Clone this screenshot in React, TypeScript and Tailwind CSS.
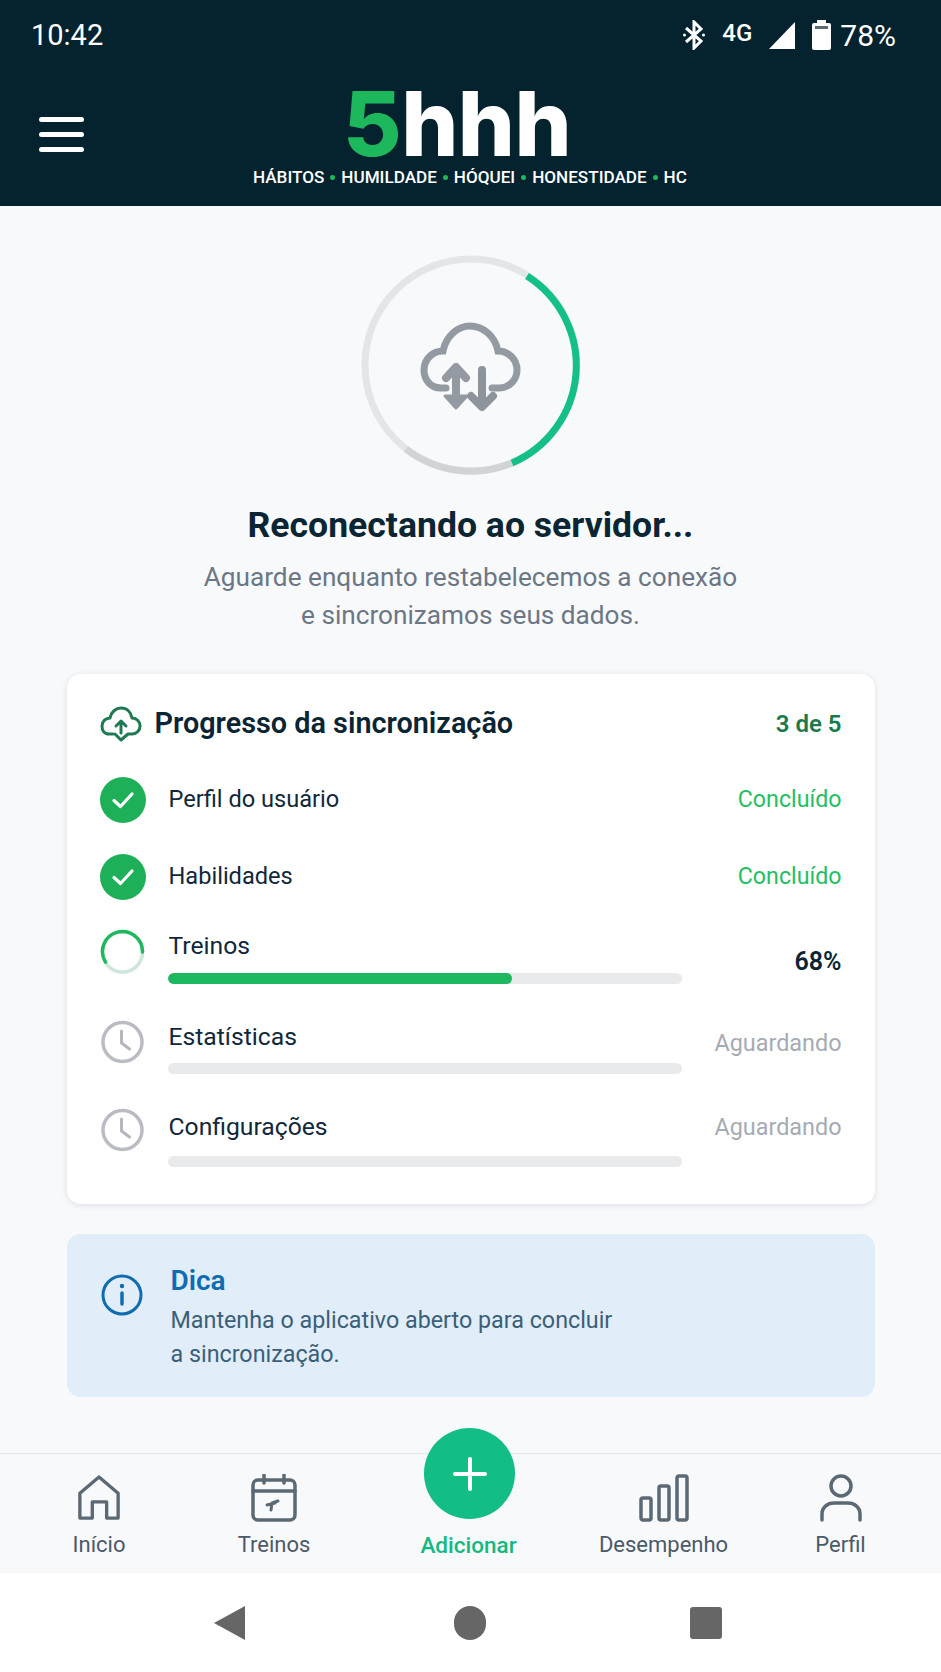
import React from "react";

const roboto = { fontFamily: 'Roboto, "Noto Sans", sans-serif' };

function Ring() {
  return (
    <svg width="230" height="230" viewBox="356 250 230 230" fill="none">
      <circle cx="471" cy="365" r="106" stroke="#e3e6e8" strokeWidth="7" />
      <path d="M512 463 A106 106 0 0 1 406 449" stroke="#d0d4d7" strokeWidth="7" />
      <path d="M527 276 A106 106 0 0 1 512 463" stroke="#14bf8a" strokeWidth="7" />
      <path d="M446 388 H441 C429 388 424 378 424 370 C424 359 433 351 443 351 C446 336 458 326 470 326 C483 326 495 336 498 351 C509 351 517 360 517 370 C517 380 509 388 499 388 H492" stroke="#949aa2" strokeWidth="7" strokeLinecap="round" />
      <path d="M456 368 V404 M446 378 L456 367 L466 378" stroke="#949aa2" strokeWidth="8" strokeLinecap="round" strokeLinejoin="round" />
      <path d="M445 396 L456 408 L467 396 Z" fill="#949aa2" stroke="#949aa2" strokeWidth="3" strokeLinejoin="round" />
      <path d="M482 370 V404 M471 396 L482 407 L493 396" stroke="#8e949c" strokeWidth="8" strokeLinecap="round" strokeLinejoin="round" />
    </svg>
  );
}

function CheckIcon() {
  return (
    <div className="flex h-[46px] w-[46px] items-center justify-center rounded-full bg-[#1db058]">
      <svg width="24" height="24" viewBox="0 0 24 24" fill="none">
        <path d="M3 12.5 L9.5 18.5 L21 6" stroke="#fff" strokeWidth="3.2" strokeLinecap="round" strokeLinejoin="round" />
      </svg>
    </div>
  );
}

function ClockIcon() {
  return (
    <svg width="46" height="46" viewBox="0 0 46 46" fill="none">
      <circle cx="22.5" cy="23" r="19.5" stroke="#b9bdc3" strokeWidth="3.5" />
      <path d="M21.5 12 V24 L29.5 30" stroke="#b4b8be" strokeWidth="3" strokeLinecap="round" strokeLinejoin="round" />
    </svg>
  );
}

function SpinIcon() {
  return (
    <svg width="46" height="46" viewBox="0 0 46 46" fill="none">
      <circle cx="22.5" cy="23" r="20" stroke="#cfe6dc" strokeWidth="3.5" />
      <path d="M5.5 33 A20 20 0 1 1 42.5 23" stroke="#1db85f" strokeWidth="3.5" strokeLinecap="round" />
    </svg>
  );
}

type StatusRow = { name: string; status: string };

function DoneRow({ name, status }: StatusRow) {
  return (
    <div className="flex h-[77px] items-center">
      <CheckIcon />
      <div className="ml-[23px] flex-1 text-[23.6px] text-[#10283a]">{name}</div>
      <div className="text-[23.2px] text-[#23c063]">{status}</div>
    </div>
  );
}

function BarRow({
  name,
  right,
  icon,
  fill,
  rightClass,
  rowClass,
  barClass,
  iconClass,
}: {
  name: string;
  right: string;
  icon: React.ReactNode;
  fill: number;
  rightClass: string;
  rowClass: string;
  barClass: string;
  iconClass: string;
}) {
  return (
    <div className={`flex items-start ${rowClass}`}>
      <div className={iconClass}>{icon}</div>
      <div className="ml-[22px] w-[514px]">
        <div className="pl-px text-[24.7px] leading-[30px] text-[#10283a]">{name}</div>
        <div className={`h-[11px] overflow-hidden rounded-full bg-[#e9eaec] ${barClass}`}>
          <div className="h-full rounded-full bg-[#1db85f]" style={{ width: `${fill}%` }} />
        </div>
      </div>
      <div className={`flex-1 text-right ${rightClass}`}>{right}</div>
    </div>
  );
}

function NavIcon({ kind }: { kind: string }) {
  const s = { stroke: "#5b6975", strokeWidth: 3.5, strokeLinecap: "round" as const, strokeLinejoin: "round" as const };
  if (kind === "home")
    return (
      <svg width="44" height="48" viewBox="0 0 46 48" fill="none">
        <path d="M3 45 V19 L23 2 L43 19 V45 H31 V28 H16 V45 Z" {...s} />
      </svg>
    );
  if (kind === "cal")
    return (
      <svg width="46" height="48" viewBox="0 0 46 48" fill="none">
        <rect x="2" y="6" width="42" height="40" rx="5" {...s} />
        <path d="M2 17 H44 M13 1 V9 M33 1 V9" {...s} />
        <path d="M20 36 L21 29 L27 27 M16 31 L24 29" {...s} strokeWidth={3} />
      </svg>
    );
  if (kind === "bars")
    return (
      <svg width="50" height="48" viewBox="0 0 50 48" fill="none">
        <rect x="2" y="24" width="10" height="22" rx="2" {...s} />
        <rect x="20" y="12" width="10" height="34" rx="2" {...s} />
        <rect x="38" y="2" width="10" height="44" rx="2" {...s} />
      </svg>
    );
  return (
    <svg width="44" height="48" viewBox="0 0 44 48" fill="none">
      <circle cx="22" cy="12" r="10" {...s} />
      <path d="M3 46 V40 C3 33 9 29 15 29 H29 C35 29 41 33 41 40 V46" {...s} />
    </svg>
  );
}

function NavItem({ kind, label, widthClass }: { kind: string; label: string; widthClass: string }) {
  return (
    <div className={`flex flex-col items-center ${widthClass}`}>
      <div className="flex h-[48px] items-center">
        <NavIcon kind={kind} />
      </div>
      <div className="mt-[9px] text-[22px] leading-[28px] text-[#4b5a68]">{label}</div>
    </div>
  );
}

export default function App() {
  return (
    <div className="flex h-[1672px] w-[941px] flex-col overflow-hidden bg-[#f8f9fb]" style={roboto}>
      <header className="h-[206px] bg-[#04232f] text-white">
        <div className="flex h-[70px] items-center pl-[31px] pr-[45px]">
          <div className="mt-[2px] flex-1 text-[29px]">10:42</div>
          <svg width="22" height="30" viewBox="0 0 22 30" fill="none">
            <path d="M3 8 L18 21 L11 28 V2 L18 9 L3 22" stroke="#fff" strokeWidth="3" />
            <circle cx="1.5" cy="15" r="1.5" fill="#fff" />
            <circle cx="20.5" cy="15" r="1.5" fill="#fff" />
          </svg>
          <div className="mb-[5px] ml-[17px] w-[33px] text-[24px] font-medium">4G</div>
          <svg className="ml-[13px]" width="27" height="28" viewBox="0 0 27 28">
            <path d="M27 1 V28 H1 Z" fill="#fff" />
          </svg>
          <svg className="ml-[17px]" width="19" height="30" viewBox="0 0 19 30">
            <path d="M5 0 H14 V3 H17 Q19 3 19 5 V28 Q19 30 17 30 H2 Q0 30 0 28 V5 Q0 3 2 3 H5 Z" fill="#fff" />
            <rect x="3" y="6" width="13" height="3" fill="#5c6b74" />
          </svg>
          <div className="ml-[9px] text-[30px]">78%</div>
        </div>
        <div className="flex pl-[39px]">
          <div className="mt-[47px] flex h-[35px] w-[45px] flex-col justify-between">
            <div className="h-[5px] rounded-full bg-white" />
            <div className="h-[5px] rounded-full bg-white" />
            <div className="h-[5px] rounded-full bg-white" />
          </div>
          <div className="ml-[169px] flex flex-col">
            <div
              className="ml-[90px] mt-[16px] text-[90px] font-extrabold leading-[76px] tracking-[-0.5px]"
              style={{ fontFamily: "Inter, sans-serif" }}
            >
              <span className="text-[#1db85c]">5</span>
              <span>hhh</span>
            </div>
            <div className="mt-[5px] flex items-center whitespace-nowrap text-[17.1px] font-medium leading-[20px] text-white">
              HÁBITOS<span className="mx-[6px] h-[5px] w-[5px] rounded-full bg-[#1db85c]" />
              HUMILDADE<span className="mx-[6px] h-[5px] w-[5px] rounded-full bg-[#1db85c]" />
              HÓQUEI<span className="mx-[6px] h-[5px] w-[5px] rounded-full bg-[#1db85c]" />
              HONESTIDADE<span className="mx-[6px] h-[5px] w-[5px] rounded-full bg-[#1db85c]" />
              HC
            </div>
          </div>
        </div>
      </header>

      <main className="flex flex-1 flex-col items-center">
        <div className="mt-[44px]">
          <Ring />
        </div>
        <h1 className="mt-[23px] text-[35.6px] font-bold leading-[44px] text-[#0b2533]">Reconectando ao servidor...</h1>
        <p className="mt-[11px] text-center text-[26.2px] leading-[38px] text-[#6b7785]">
          Aguarde enquanto restabelecemos a conexão
          <br />e sincronizamos seus dados.
        </p>

        <section className="mt-[40px] h-[530px] w-[808px] rounded-[14px] bg-white px-[33px] shadow-[0_1px_6px_rgba(20,40,60,0.12)]">
          <div className="flex h-[87px] items-center pt-[13px]">
            <svg width="42" height="36" viewBox="0 0 42 36" fill="none">
              <path
                d="M13 28 H9 C4 28 2 24 2 20 C2 15 6 12 10 12 C11 6 16 2 21 2 C27 2 31 6 32 12 C37 12 40 16 40 20 C40 24 37 28 32 28 H28 L21 34 L15 28"
                stroke="#1f7a53"
                strokeWidth="3"
                strokeLinecap="round"
                strokeLinejoin="round"
              />
              <path d="M21 27 V17 M16 20 L21 15 L26 20" stroke="#1f7a53" strokeWidth="3" strokeLinecap="round" strokeLinejoin="round" />
            </svg>
            <div className="ml-[13px] flex-1 text-[28.8px] font-semibold text-[#0b2533]">Progresso da sincronização</div>
            <div className="text-[24px] font-semibold text-[#1a7a4c]">3 de 5</div>
          </div>
          <DoneRow name="Perfil do usuário" status="Concluído" />
          <DoneRow name="Habilidades" status="Concluído" />
          <BarRow
            name="Treinos"
            right="68%"
            icon={<SpinIcon />}
            fill={67}
            rowClass="pt-[16px] h-[107px]"
            barClass="mt-[12px]"
            iconClass="mt-[-2px]"
            rightClass="text-[25px] font-semibold text-[#0b2533] mt-[12px]"
          />
          <BarRow
            name="Estatísticas"
            right="Aguardando"
            icon={<ClockIcon />}
            fill={0}
            rowClass="h-[90px]"
            barClass="mt-[11px]"
            iconClass="mt-[-3px]"
            rightClass="text-[23.4px] text-[#a5abb3] mt-[4px]"
          />
          <BarRow
            name="Configurações"
            right="Aguardando"
            icon={<ClockIcon />}
            fill={0}
            rowClass=""
            barClass="mt-[14px]"
            iconClass="mt-[-5px]"
            rightClass="text-[23.4px] text-[#a5abb3] mt-[-2px]"
          />
        </section>

        <section className="mt-[30px] flex h-[163px] w-[808px] rounded-[14px] bg-[#e1edf8] pl-[33px]">
          <svg className="mt-[39px]" width="44" height="44" viewBox="0 0 44 44" fill="none">
            <circle cx="22" cy="22" r="19" stroke="#0f6cb0" strokeWidth="3" />
            <path d="M22 20 V31" stroke="#0f6cb0" strokeWidth="3.5" strokeLinecap="round" />
            <circle cx="22" cy="13" r="2.2" fill="#0f6cb0" />
          </svg>
          <div className="ml-[27px] mt-[30px]">
            <div className="text-[28px] font-semibold leading-[34px] text-[#0f6cb0]">Dica</div>
            <div className="mt-[5px] text-[23.3px] leading-[34px] text-[#3a5f78]">
              Mantenha o aplicativo aberto para concluir
              <br />a sincronização.
            </div>
          </div>
        </section>
      </main>

      <nav className="relative flex h-[120px] border-t border-[#e6e8ea] bg-[#f8f9fb] pt-[20px]">
        <NavItem kind="home" label="Início" widthClass="w-[198px]" />
        <NavItem kind="cal" label="Treinos" widthClass="w-[152px]" />
        <div className="flex w-[237px] flex-col items-center pt-[57px]">
          <div className="text-[22.5px] font-medium leading-[28px] text-[#14b981]">Adicionar</div>
        </div>
        <NavItem kind="bars" label="Desempenho" widthClass="w-[153px]" />
        <NavItem kind="person" label="Perfil" widthClass="w-[201px]" />
        <div className="absolute left-[424px] top-[-26px] flex h-[91px] w-[91px] items-center justify-center rounded-full bg-[#12bd86]">
          <svg width="34" height="34" viewBox="0 0 34 34" fill="none">
            <path d="M17 2 V32 M2 17 H32" stroke="#fff" strokeWidth="4" strokeLinecap="round" />
          </svg>
        </div>
      </nav>

      <div className="flex h-[99px] items-center bg-white">
        <div className="ml-[214px] h-0 w-0 border-y-[17px] border-r-[31px] border-y-transparent border-r-[#666]" />
        <div className="ml-[209px] h-[34px] w-[32px] rounded-full bg-[#666]" />
        <div className="ml-[204px] h-[32px] w-[32px] rounded-[3px] bg-[#666]" />
      </div>
    </div>
  );
}
